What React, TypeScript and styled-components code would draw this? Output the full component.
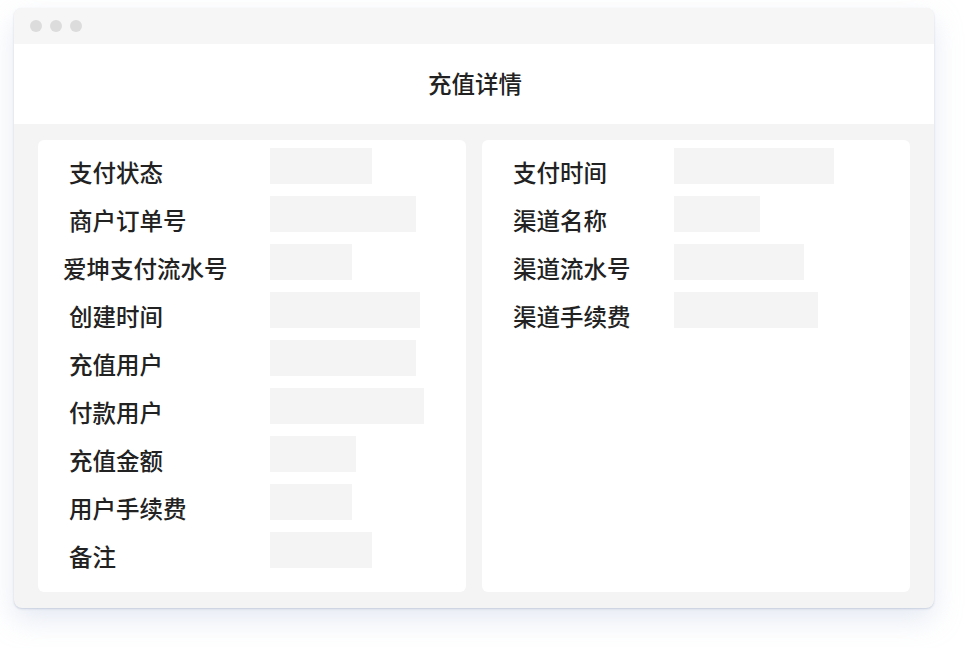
import styled, { createGlobalStyle } from "styled-components";

const GlobalStyle = createGlobalStyle`
  html, body {
    margin: 0;
    padding: 0;
    background: #ffffff;
  }
  body {
    font-family: "Noto Sans CJK SC", "Noto Sans", sans-serif;
    color: #222222;
  }
`

const Page = styled.div`
  width: 968px;
  height: 648px;
  padding: 8px 34px 0 14px;
  box-sizing: border-box;
`

const Window = styled.div`
  width: 920px;
  height: 600px;
  display: flex;
  flex-direction: column;
  border-radius: 8px;
  overflow: hidden;
  background: #f4f4f4;
  box-shadow: 0 1px 2px rgba(150, 165, 190, 0.45), 0 12px 28px rgba(180, 195, 220, 0.35);
`

const TitleBar = styled.div`
  height: 36px;
  flex-shrink: 0;
  display: flex;
  align-items: center;
  gap: 8px;
  padding-left: 16px;
  background: #f6f6f6;
`

const Dot = styled.span`
  width: 12px;
  height: 12px;
  border-radius: 50%;
  background: #dcdcdc;
`

const Header = styled.div`
  height: 80px;
  flex-shrink: 0;
  display: flex;
  align-items: center;
  justify-content: center;
  padding-left: 2px;
  padding-bottom: 2px;
  box-sizing: border-box;
  background: #ffffff;
  font-size: 23.5px;
  font-weight: 500;
  color: #222;
`

const Body = styled.div`
  flex: 1;
  display: grid;
  grid-template-columns: 1fr 1fr;
  gap: 16px;
  padding: 16px 24px 16px 24px;
`

const Card = styled.div<{ labelWidth: number }>`
  background: #ffffff;
  border-radius: 6px;
  padding: 8px 0 24px 31px;
  display: flex;
  flex-direction: column;
  gap: 12px;
  --label-w: ${p => p.labelWidth}px;
`

const Row = styled.div`
  display: flex;
  align-items: flex-start;
  height: 36px;
`

const Label = styled.div<{ shift?: number }>`
  width: var(--label-w);
  flex-shrink: 0;
  margin-left: ${p => -(p.shift || 0)}px;
  padding-right: ${p => p.shift || 0}px;
  box-sizing: content-box;
  font-size: 23.5px;
  font-weight: 500;
  line-height: 36px;
  margin-top: 6px;
  white-space: nowrap;
  color: #222;
`

const Bar = styled.div`
  height: 36px;
  background: #f4f4f4;
`

type Item = { label: string; w: number; shift?: number }

const leftItems: Item[] = [
  { label: "支付状态", w: 102 },
  { label: "商户订单号", w: 146 },
  { label: "爱坤支付流水号", w: 82, shift: 6 },
  { label: "创建时间", w: 150 },
  { label: "充值用户", w: 146 },
  { label: "付款用户", w: 154 },
  { label: "充值金额", w: 86 },
  { label: "用户手续费", w: 82 },
  { label: "备注", w: 102 },
]

const rightItems: Item[] = [
  { label: "支付时间", w: 160 },
  { label: "渠道名称", w: 86 },
  { label: "渠道流水号", w: 130 },
  { label: "渠道手续费", w: 144 },
]

function DetailCard({ items, labelWidth }: { items: Item[]; labelWidth: number }) {
  return (
    <Card labelWidth={labelWidth}>
      {items.map(item => (
        <Row key={item.label}>
          <Label shift={item.shift}>{item.label}</Label>
          <Bar style={{ width: item.w }} />
        </Row>
      ))}
    </Card>
  )
}

export default function App() {
  return (
    <>
      <GlobalStyle />
      <Page>
        <Window>
          <TitleBar>
            <Dot />
            <Dot />
            <Dot />
          </TitleBar>
          <Header>充值详情</Header>
          <Body>
            <DetailCard items={leftItems} labelWidth={201} />
            <DetailCard items={rightItems} labelWidth={161} />
          </Body>
        </Window>
      </Page>
    </>
  )
}
